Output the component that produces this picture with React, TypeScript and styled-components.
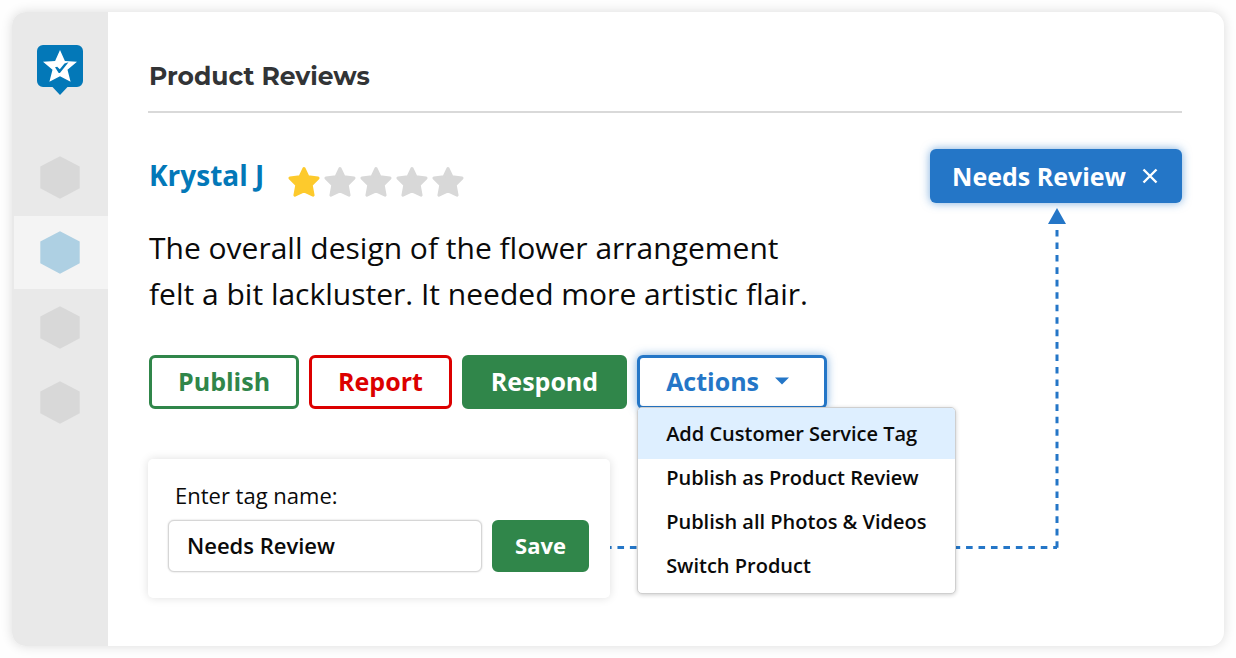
import React from "react";
import styled, { createGlobalStyle } from "styled-components";

const color = {
  brand: "#0378b8",
  blue: "#2476c7",
  green: "#30864a",
  red: "#dc0000",
  grey: "#d8d8d8",
  gold: "#fdca2c",
};

const GlobalStyle = createGlobalStyle`
  *, *::before, *::after { box-sizing: border-box; }
  body {
    margin: 0;
    background: #fefefe;
    color: #0a0a0a;
    font-family: "Open Sans", "Noto Sans", sans-serif;
  }
  button, input { font-family: inherit; margin: 0; }
  button { cursor: pointer; }
`;

const Page = styled.div`
  display: flex;
  min-height: 100vh;
  padding: 12px;
`;

const Window = styled.div`
  display: flex;
  flex: 1;
  background: #fff;
  border-radius: 14px;
  box-shadow: 0 0 12px rgba(0, 0, 0, 0.14);
`;

const Sidebar = styled.aside`
  display: flex;
  flex-direction: column;
  align-items: center;
  flex: none;
  width: 96px;
  padding-top: 33px;
  background: #e9e9e9;
  border-radius: 14px 0 0 14px;
`;

const Nav = styled.nav`
  display: flex;
  flex-direction: column;
  gap: 2px;
  width: 100%;
  margin-top: 46px;
  padding-left: 2px;
`;

const NavItem = styled.button<{ $active?: boolean }>`
  display: flex;
  align-items: center;
  justify-content: center;
  height: 73px;
  padding: 0 2px 0 0;
  border: 0;
  background: ${(p) => (p.$active ? "#f4f4f4" : "transparent")};
  color: ${(p) => (p.$active ? "#aed0e3" : color.grey)};
`;

const Main = styled.main`
  position: relative;
  flex: 1;
  min-width: 0;
  padding: 0 42px 48px 40px;
`;

const Header = styled.header`
  display: flex;
  align-items: center;
  height: 101px;
  padding-top: 28px;
  border-bottom: 2px solid #d9d9d9;
`;

const Title = styled.h1`
  margin: 0;
  padding-left: 1px;
  color: #323436;
  font-family: Montserrat, Inter, sans-serif;
  font-size: 25px;
  font-weight: 700;
  line-height: 32px;
`;

const ReviewHead = styled.div`
  display: flex;
  align-items: center;
  height: 54px;
  margin-top: 36px;
`;

const Author = styled.a`
  padding: 0 0 2px 1px;
  color: ${color.brand};
  font-size: 28px;
  font-weight: 700;
  line-height: 36px;
  text-decoration: none;
`;

const Rating = styled.div`
  display: flex;
  gap: 4px;
  margin-left: 24px;
  padding-top: 12px;
`;

const Tag = styled.div`
  display: flex;
  align-items: center;
  gap: 16px;
  height: 54px;
  margin-left: auto;
  padding: 0 24px 1px 22px;
  border-radius: 6px;
  background: ${color.blue};
  box-shadow: 0 0 10px rgba(36, 118, 199, 0.6);
  color: #fff;
  font-size: 25px;
  font-weight: 700;
`;

const TagClose = styled.button`
  display: flex;
  padding: 0;
  border: 0;
  background: none;
  color: inherit;
`;

const ReviewText = styled.p`
  max-width: 680px;
  margin: 22px 0 0;
  padding-left: 1px;
  font-size: 30px;
  line-height: 46px;
`;

const Toolbar = styled.div`
  display: flex;
  gap: 10px;
  margin-top: 38px;
  padding-left: 1px;
`;

const Button = styled.button<{ $tone: string; $filled?: boolean; $focus?: boolean }>`
  display: flex;
  align-items: center;
  justify-content: center;
  gap: 16px;
  height: 54px;
  padding: 0 26px 2px;
  border: 3px solid ${(p) => p.$tone};
  border-radius: 6px;
  background: ${(p) => (p.$filled ? p.$tone : "#fff")};
  box-shadow: ${(p) => (p.$focus ? "0 0 10px rgba(36, 118, 199, 0.6)" : "none")};
  color: ${(p) => (p.$filled ? "#fff" : p.$tone)};
  font-size: 25px;
  font-weight: 700;
`;

const SaveButton = styled(Button)`
  height: 52px;
  padding: 0 20px 3px;
  font-size: 22px;
`;

const ActionsMenu = styled.div`
  position: relative;
`;

const MenuButton = styled(Button)`
  padding-right: 35px;
`;

const MenuList = styled.div`
  position: absolute;
  top: 52px;
  left: 0;
  z-index: 2;
  display: flex;
  flex-direction: column;
  padding: 3px 0 6px;
  overflow: hidden;
  border: 1px solid #cfcfcf;
  border-radius: 5px;
  background: #fff;
  box-shadow: 0 1px 4px rgba(0, 0, 0, 0.2);
`;

const MenuItem = styled.button<{ $active?: boolean }>`
  height: 44px;
  padding: 0 28px;
  border: 0;
  background: ${(p) => (p.$active ? "#deefff" : "transparent")};
  box-shadow: ${(p) => (p.$active ? "0 0 0 4px #deefff" : "none")};
  color: #0a0a0a;
  font-size: 20px;
  font-weight: 600;
  text-align: left;
  white-space: nowrap;
`;

const TagForm = styled.form`
  position: relative;
  z-index: 1;
  width: 462px;
  margin-top: 50px;
  padding: 19px 21px 26px 20px;
  border-radius: 5px;
  background: #fff;
  box-shadow: 0 0 10px rgba(0, 0, 0, 0.13);
`;

const Label = styled.label`
  display: block;
  padding-left: 7px;
  font-size: 22px;
  line-height: 34px;
`;

const FormRow = styled.div`
  display: flex;
  gap: 10px;
  margin-top: 8px;
`;

const TextInput = styled.input`
  flex: 1;
  min-width: 0;
  height: 52px;
  padding: 0 18px 3px;
  border: 1px solid #d6d6d6;
  border-radius: 6px;
  outline: 0;
  background: #fff;
  box-shadow: 0 0 2px rgba(0, 0, 0, 0.2);
  color: #0a0a0a;
  font-size: 22px;
  font-weight: 600;
`;

const Connector = styled.div`
  position: absolute;
  top: 196px;
  left: 497px;
  right: 167px;
  height: 344px;
  pointer-events: none;
`;

function Logo() {
  return (
    <svg width="46" height="50" viewBox="0 0 46 50" role="img" aria-label="Home">
      <path
        fill={color.brand}
        d="M6 0h34a6 6 0 0 1 6 6v30a6 6 0 0 1-6 6h-9.500l-7.500 8-7.500-8H6a6 6 0 0 1-6-6V6a6 6 0 0 1 6-6z"
      />
      <path
        fill="#fff"
        d="M23 5l4.900 11 12.100.7-9.500 8 3.100 12L23 31.300l-10.600 5.400 3.100-12-9.500-8 12.100-.7z"
      />
      <path d="M18 22.300l2.200-.6 2.600 2.600 4.700-5.900 4-1.200-8.600 10.800h-1.200z" fill={color.brand} />
    </svg>
  );
}

function Hexagon() {
  return (
    <svg width="40" height="43" viewBox="0 0 40 43" aria-hidden="true">
      <path fill="currentColor" d="M20 .3l19.700 10.300v21.600L20 42.700.3 32.200V10.600z" />
    </svg>
  );
}

function Star({ on }: { on: boolean }) {
  return (
    <svg width="32" height="32" viewBox="0 0 32 32" aria-hidden="true">
      <path
        fill={on ? color.gold : color.grey}
        stroke={on ? color.gold : color.grey}
        strokeWidth="3"
        strokeLinejoin="round"
        d="M16 2.500l4 8.300 10 1.300-6.800 6.800 1.900 10.300L16 24.900l-9.100 4.300 1.900-10.300L2 12.100l10-1.300z"
      />
    </svg>
  );
}

function TagArrow() {
  const dash = { stroke: color.blue, strokeWidth: 3, strokeDasharray: "6.600 5.850" };
  return (
    <Connector aria-hidden="true">
      <svg width="100%" height="100%" overflow="visible">
        <line x1="0" y1="339.500" x2="100%" y2="339.500" {...dash} />
        <svg x="100%" overflow="visible">
          <path d="M0 0l9 16H-9z" fill={color.blue} />
          <line x1="0" y1="22" x2="0" y2="340" {...dash} />
        </svg>
      </svg>
    </Connector>
  );
}

const menuItems = [
  "Add Customer Service Tag",
  "Publish as Product Review",
  "Publish all Photos & Videos",
  "Switch Product",
];

export default function App() {
  return (
    <>
      <GlobalStyle />
      <Page>
        <Window>
          <Sidebar>
            <Logo />
            <Nav>
              {["Overview", "Reviews", "Reports", "Settings"].map((name) => (
                <NavItem key={name} type="button" aria-label={name} $active={name === "Reviews"}>
                  <Hexagon />
                </NavItem>
              ))}
            </Nav>
          </Sidebar>
          <Main>
            <TagArrow />
            <Header>
              <Title>Product Reviews</Title>
            </Header>
            <ReviewHead>
              <Author href="#krystal-j">Krystal J</Author>
              <Rating role="img" aria-label="1 out of 5 stars">
                {[1, 2, 3, 4, 5].map((n) => (
                  <Star key={n} on={n <= 1} />
                ))}
              </Rating>
              <Tag>
                Needs Review
                <TagClose type="button" aria-label="Remove tag">
                  <svg width="16" height="16" viewBox="0 0 16 16">
                    <path d="M1.500 1.500l13 13M14.500 1.500l-13 13" stroke="currentColor" strokeWidth="2.400" />
                  </svg>
                </TagClose>
              </Tag>
            </ReviewHead>
            <ReviewText>
              The overall design of the flower arrangement felt a bit lackluster. It needed more
              artistic flair.
            </ReviewText>
            <Toolbar>
              <Button type="button" $tone={color.green}>Publish</Button>
              <Button type="button" $tone={color.red}>Report</Button>
              <Button type="button" $tone={color.green} $filled>Respond</Button>
              <ActionsMenu>
                <MenuButton type="button" $tone={color.blue} $focus aria-haspopup="menu" aria-expanded="true">
                  Actions
                  <svg width="14" height="8" viewBox="0 0 14 8" aria-hidden="true">
                    <path d="M0 .5h14L7 7.500z" fill="currentColor" />
                  </svg>
                </MenuButton>
                <MenuList role="menu">
                  {menuItems.map((item, i) => (
                    <MenuItem key={item} type="button" role="menuitem" $active={i === 0}>
                      {item}
                    </MenuItem>
                  ))}
                </MenuList>
              </ActionsMenu>
            </Toolbar>
            <TagForm onSubmit={(e) => e.preventDefault()}>
              <Label htmlFor="tag-name">Enter tag name:</Label>
              <FormRow>
                <TextInput id="tag-name" type="text" defaultValue="Needs Review" />
                <SaveButton type="submit" $tone={color.green} $filled>Save</SaveButton>
              </FormRow>
            </TagForm>
          </Main>
        </Window>
      </Page>
    </>
  );
}
